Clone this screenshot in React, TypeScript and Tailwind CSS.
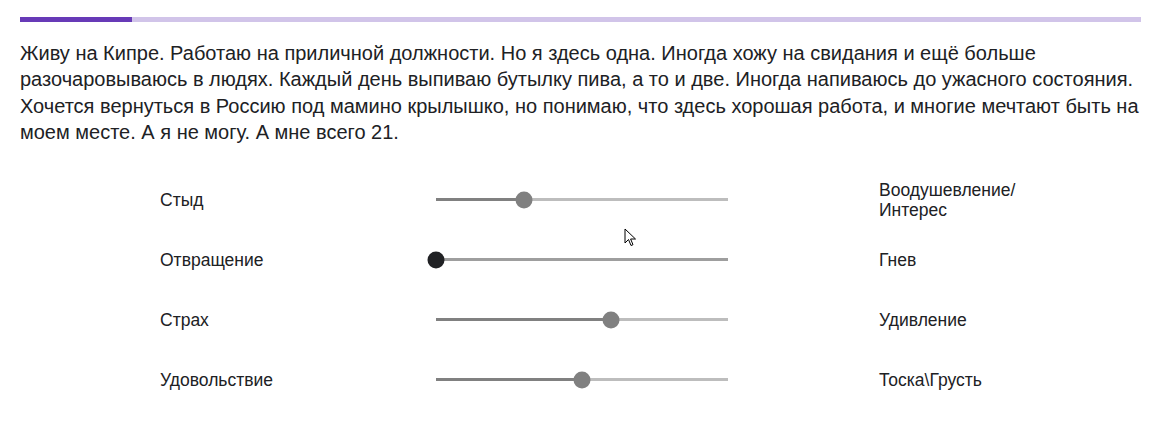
import React from "react";

type Row = { left: string; right: React.ReactNode; value: number; disabled?: boolean };

const rows: Row[] = [
  { left: "Стыд", right: (<>Воодушевление/<br />Интерес</>), value: 0.3 },
  { left: "Отвращение", right: "Гнев", value: 0, disabled: true },
  { left: "Страх", right: "Удивление", value: 0.6 },
  { left: "Удовольствие", right: "Тоска\\Грусть", value: 0.5 },
];

function Slider({ value, disabled }: { value: number; disabled?: boolean }) {
  return (
    <div className="relative w-[292px] h-[20px] flex items-center">
      {disabled ? (
        <div className="w-full h-[3px] bg-[#9e9e9e]" />
      ) : (
        <div className="w-full h-[3px] bg-[#bdbdbd] flex">
          <div className="h-full bg-[#808080]" style={{ width: `${value * 100}%` }} />
        </div>
      )}
      <div
        className={`absolute top-1/2 w-[17px] h-[17px] rounded-full -translate-x-1/2 -translate-y-1/2 ${
          disabled ? "bg-[#202124]" : "bg-[#808080]"
        }`}
        style={{ left: `${value * 100}%` }}
      />
    </div>
  );
}

export default function App() {
  return (
    <div
      className="relative w-[1161px] h-[422px] bg-white px-[20px] pt-[17px] text-[#202124]"
      style={{ fontFamily: '"Liberation Sans", Arial, sans-serif' }}
    >
      <div className="h-[5px] w-full bg-[#d1c4e9] flex">
        <div className="h-full w-[112px] bg-[#673ab7]" />
      </div>
      <p className="mt-[18px] text-[20px] leading-[26.4px]">
        Живу на Кипре. Работаю на приличной должности. Но я здесь одна. Иногда хожу на свидания и ещё больше
        разочаровываюсь в людях. Каждый день выпиваю бутылку пива, а то и две. Иногда напиваюсь до ужасного состояния.
        Хочется вернуться в Россию под мамино крылышко, но понимаю, что здесь хорошая работа, и многие мечтают быть на
        моем месте. А я не могу. А мне всего 21.
      </p>
      <div className="mt-[24px] flex flex-col">
        {rows.map((r, i) => (
          <div key={i} className="h-[60px] flex items-center pl-[140px] text-[17.5px] leading-[20px]">
            <div className="w-[276px]">{r.left}</div>
            <Slider value={r.value} disabled={r.disabled} />
            <div className="ml-[151px] w-[160px]">{r.right}</div>
          </div>
        ))}
      </div>
      <svg
        className="absolute left-[624px] top-[228px]"
        width="14"
        height="20"
        viewBox="0 0 14 20"
      >
        <path
          d="M1 1 L1 15 L4.5 11.5 L7 17.5 L9 16.7 L6.6 11 L11.5 11 Z"
          fill="white"
          stroke="black"
          strokeWidth="1"
          strokeLinejoin="round"
        />
      </svg>
    </div>
  );
}
